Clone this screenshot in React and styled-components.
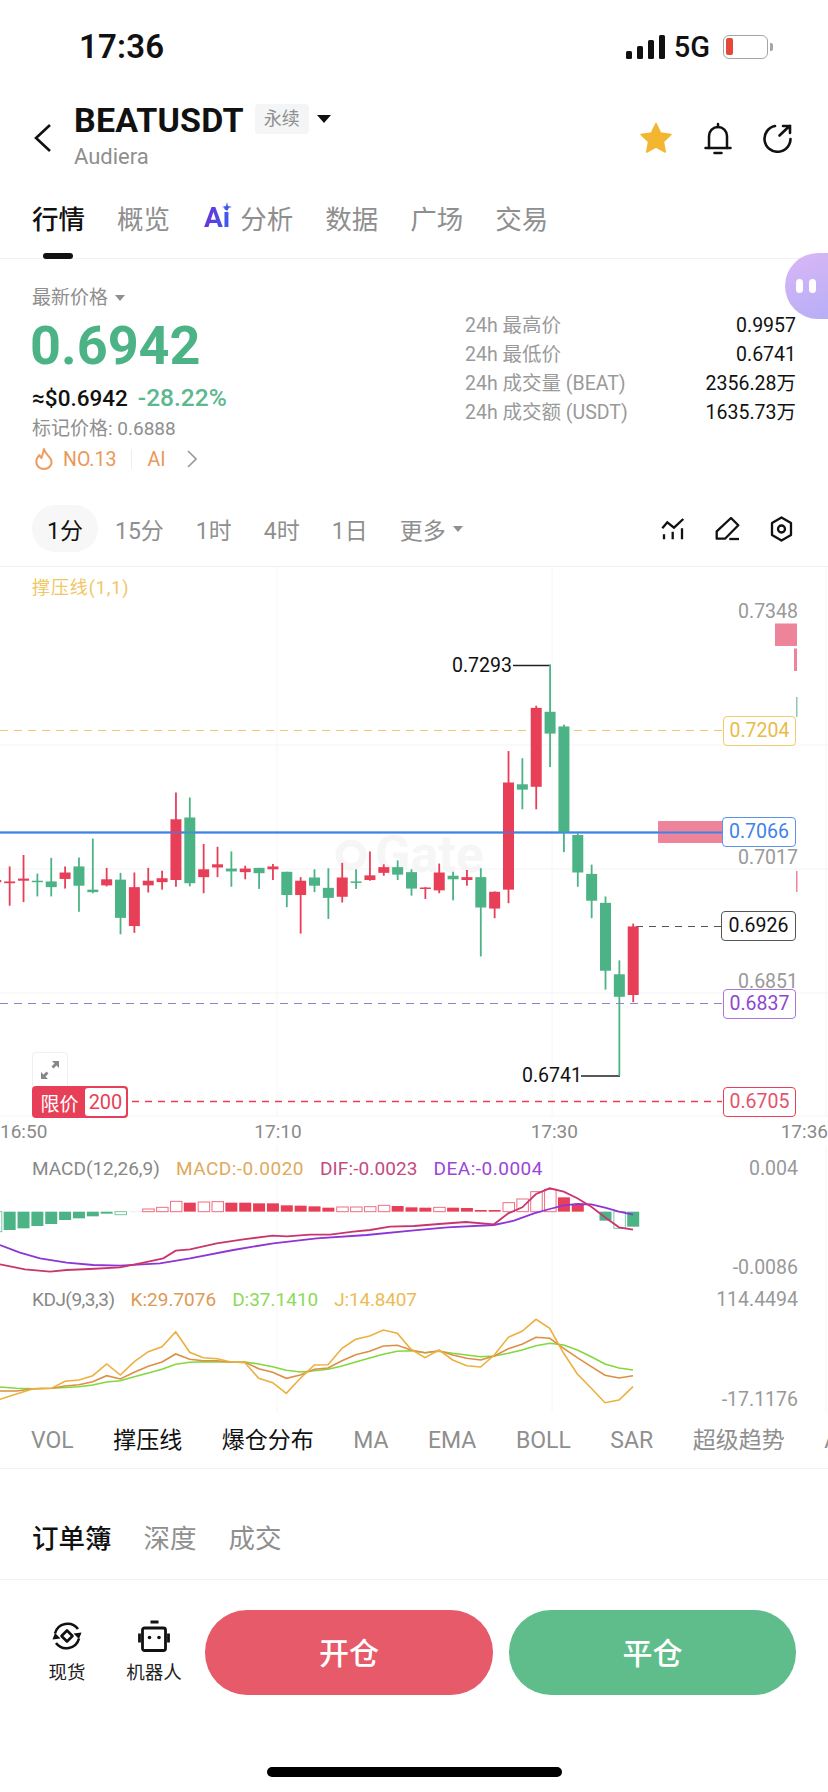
import React from 'react';
import styled, { createGlobalStyle } from 'styled-components';

const FONT = `Roboto, "Noto Sans CJK SC", sans-serif`;
const GREEN = '#4cb386';
const RED = '#e83f58';
const GRAY = '#8f8f8f';

const GlobalStyle = createGlobalStyle`
  html, body { margin: 0; padding: 0; background: #fff; }
  body { font-family: ${FONT}; color: #111; }
  * { box-sizing: border-box; }
`;

const Page = styled.div`
  position: relative;
  width: 828px;
  height: 1792px;
  overflow: hidden;
  background: #fff;
`;

/* status bar */
const StatusBar = styled.div`
  height: 90px;
  padding: 30px 60px 0 79px;
  display: flex;
  justify-content: space-between;
  align-items: flex-start;
`;
const Clock = styled.div`
  font-size: 33px;
  line-height: 34px;
  font-weight: 600;
  letter-spacing: 0.2px;
`;
const StatusRight = styled.div`
  display: flex;
  align-items: center;
  height: 34px;
  gap: 9px;
`;
const NetLabel = styled.span`
  font-size: 29px;
  font-weight: 500;
  margin-right: 4px;
`;
const Battery = styled.div`
  position: relative;
  width: 45px;
  height: 24px;
  border: 1.5px solid #a5a5a5;
  border-radius: 6px;
  padding: 2px;
  &::before {
    content: '';
    display: block;
    width: 7px;
    height: 17px;
    background: #e5483a;
    border-radius: 2px;
  }
  &::after {
    content: '';
    position: absolute;
    right: -6px;
    top: 7px;
    width: 3px;
    height: 8px;
    background: #a5a5a5;
    border-radius: 0 2px 2px 0;
  }
`;

/* header */
const Header = styled.div`
  height: 96px;
  padding: 0 35px 0 34px;
  display: flex;
  align-items: center;
`;
const TitleBlock = styled.div`
  margin-left: 23px;
  padding-bottom: 2px;
`;
const TitleRow = styled.div`
  display: flex;
  align-items: center;
  height: 30px;
`;
const Symbol = styled.span`
  font-size: 34px;
  line-height: 30px;
  font-weight: 700;
  letter-spacing: 0.2px;
`;
const Badge = styled.span`
  margin: -3px 8px 0 11px;
  width: 54px;
  height: 30px;
  border-radius: 4px;
  background: #f4f5f6;
  color: ${GRAY};
  font-size: 18px;
  line-height: 30px;
  text-align: center;
`;
const Caret = styled.span`
  width: 0;
  height: 0;
  margin-top: ${(p) => p.$top || 0}px;
  margin-left: ${(p) => p.$left || 0}px;
  border-left: ${(p) => p.$size}px solid transparent;
  border-right: ${(p) => p.$size}px solid transparent;
  border-top: ${(p) => p.$size + 1}px solid ${(p) => p.$color};
`;
const SubTitle = styled.div`
  margin-top: 10px;
  font-size: 22px;
  line-height: 24px;
  color: ${GRAY};
`;
const HeaderIcons = styled.div`
  margin-left: auto;
  display: flex;
  align-items: center;
  gap: 31px;
`;

/* main tabs */
const Tabs = styled.div`
  height: 73px;
  padding: 16px 0 0 32px;
  display: flex;
  gap: 32px;
  border-bottom: 1px solid #f1f1f1;
`;
const Tab = styled.div`
  position: relative;
  display: flex;
  align-items: center;
  height: 30px;
  font-size: 26.5px;
  color: ${(p) => (p.$active ? '#111' : GRAY)};
  font-weight: ${(p) => (p.$active ? 500 : 400)};
  ${(p) =>
    p.$active &&
    `&::after {
      content: '';
      position: absolute;
      left: 11px;
      top: 51px;
      width: 30px;
      height: 6px;
      border-radius: 3px;
      background: #111;
    }`}
`;
const AiMark = styled.span`
  position: relative;
  margin: 0 10px 0 2px;
  font-size: 28px;
  font-weight: 700;
  background: linear-gradient(90deg, #6a33d8, #3a5cf0);
  -webkit-background-clip: text;
  background-clip: text;
  color: transparent;
`;
const AiSpark = styled.svg`
  position: absolute;
  right: -2px;
  top: 1px;
`;

/* price block */
const PriceSection = styled.div`
  display: flex;
  height: 246px;
  padding: 0 32px;
`;
const PriceLeft = styled.div`
  padding-top: 27px;
`;
const LabelRow = styled.div`
  display: flex;
  align-items: center;
  font-size: 19px;
  line-height: 24px;
  color: ${GRAY};
`;
const BigPrice = styled.div`
  margin: 6px 0 8px -2px;
  font-size: 54px;
  line-height: 60px;
  font-weight: 700;
  color: ${GREEN};
`;
const FiatRow = styled.div`
  display: flex;
  gap: 10px;
  font-size: 22.5px;
  line-height: 28px;
`;
const Fiat = styled.span`
  font-weight: 500;
`;
const Change = styled.span`
  color: #5cb88f;
  font-size: 24.5px;
  font-weight: 500;
`;
const MarkPrice = styled.div`
  margin-top: 5px;
  font-size: 19px;
  line-height: 24px;
  color: ${GRAY};
`;
const TagRow = styled.div`
  margin-top: 5px;
  height: 26px;
  display: flex;
  align-items: center;
  color: #e8995a;
  font-size: 19.5px;
`;
const TagDivider = styled.span`
  width: 1px;
  height: 20px;
  margin: 0 15px;
  background: #eee;
`;
const Stats = styled.div`
  margin-left: auto;
  width: 331px;
  padding-top: 52px;
`;
const StatRow = styled.div`
  display: flex;
  justify-content: space-between;
  font-size: 19.5px;
  line-height: 29px;
`;
const StatLabel = styled.span`
  color: #9a9a9a;
`;
const StatValue = styled.span`
  color: #111;
`;

/* timeframe row */
const Timeframes = styled.div`
  height: 62px;
  padding: 0 35px 0 32px;
  display: flex;
  gap: 32px;
  border-bottom: 1px solid #f1f1f1;
`;
const Period = styled.div`
  height: 47px;
  display: flex;
  align-items: center;
  font-size: 23px;
  color: ${GRAY};
`;
const ActivePeriod = styled(Period)`
  width: 66px;
  margin-right: -15px;
  justify-content: center;
  border-radius: 24px;
  background: #f7f7f7;
  color: #111;
`;
const ToolIcons = styled.div`
  margin-left: auto;
  height: 47px;
  display: flex;
  align-items: center;
  gap: 30px;
`;

/* chart */
const Chart = styled.div`
  position: relative;
  height: 550px;
`;
const Plot = styled.svg`
  position: absolute;
  left: 0;
  top: 0;
  display: block;
`;
const ChartLegend = styled.div`
  position: absolute;
  left: 32px;
  top: 10px;
  font-size: 18px;
  line-height: 22px;
  letter-spacing: 0.9px;
  color: #f0c763;
`;
const Watermark = styled.div`
  position: absolute;
  left: 375px;
  top: 258px;
  font-size: 52px;
  line-height: 60px;
  font-weight: 700;
  color: #f6f6f6;
`;
const AxisLabel = styled.div`
  position: absolute;
  right: 30px;
  top: ${(p) => p.$y}px;
  font-size: 19.5px;
  line-height: 24px;
  color: #999;
`;
const PriceTag = styled.div`
  position: absolute;
  right: 32px;
  top: ${(p) => p.$y}px;
  width: ${(p) => p.$w}px;
  height: 30px;
  border: 1px solid ${(p) => p.$c};
  border-radius: 4px;
  background: #fff;
  color: ${(p) => p.$t || p.$c};
  font-size: 19.5px;
  line-height: 28px;
  text-align: center;
`;
const PeakLabel = styled.div`
  position: absolute;
  left: ${(p) => p.$x}px;
  top: ${(p) => p.$y}px;
  font-size: 19.5px;
  line-height: 22px;
  color: #111;
`;
const ExpandBox = styled.div`
  position: absolute;
  left: 32px;
  top: 485px;
  width: 36px;
  height: 36px;
  display: flex;
  align-items: center;
  justify-content: center;
  border: 1px solid #efefef;
  border-radius: 4px 4px 0 0;
  background: #fff;
`;
const LimitBadge = styled.div`
  position: absolute;
  left: 32px;
  top: 519px;
  width: 96px;
  height: 32px;
  padding: 2px;
  display: flex;
  align-items: center;
  border-radius: 4px;
  background: ${RED};
  color: #fff;
  font-size: 19px;
`;
const LimitText = styled.span`
  width: 51px;
  text-align: center;
`;
const LimitValue = styled.span`
  flex: 1;
  height: 28px;
  border-radius: 3px;
  background: #fff;
  color: ${RED};
  font-size: 20px;
  line-height: 28px;
  text-align: center;
`;

const TimeAxis = styled.div`
  height: 29px;
  display: flex;
  font-size: 19px;
  line-height: 30px;
  color: #8a8a8a;
`;
const TimeSlot = styled.span`
  margin-left: ${(p) => (p.$ml === undefined ? 'auto' : `${p.$ml}px`)};
`;

const Panel = styled.div`
  position: relative;
  height: ${(p) => p.$h}px;
`;
const Legend = styled.div`
  position: relative;
  padding: ${(p) => p.$pt}px 0 0 32px;
  display: flex;
  gap: 16px;
  font-size: 19px;
  line-height: 24px;
  white-space: nowrap;
`;
const LegendItem = styled.span`
  color: ${(p) => p.$c};
  letter-spacing: ${(p) => p.$ls || 0}px;
`;

/* indicators + order tabs */
const IndicatorRow = styled.div`
  height: 49px;
  padding: 8px 0 0 31px;
  display: flex;
  gap: 39.5px;
  overflow: hidden;
  border-bottom: 1px solid #f3f3f3;
`;
const Indicator = styled.span`
  font-size: 23px;
  line-height: 26px;
  white-space: nowrap;
  color: ${(p) => (p.$on ? '#111' : GRAY)};
`;
const BookTabs = styled.div`
  height: 111px;
  padding: 55px 0 0 32px;
  display: flex;
  gap: 32px;
  border-bottom: 1px solid #f3f3f3;
`;
const BookTab = styled.span`
  font-size: 26.5px;
  line-height: 30px;
  font-weight: ${(p) => (p.$on ? 500 : 400)};
  color: ${(p) => (p.$on ? '#111' : GRAY)};
`;

/* footer */
const Footer = styled.div`
  padding: 30px 32px 0 0;
  display: flex;
  align-items: flex-start;
`;
const FootItem = styled.div`
  width: ${(p) => p.$w}px;
  margin-left: ${(p) => p.$ml}px;
  padding-top: 10px;
  display: flex;
  flex-direction: column;
  align-items: center;
  font-size: 18.5px;
  line-height: 24px;
  color: #222;
`;
const FootIcon = styled.svg`
  margin-bottom: 9px;
  display: block;
`;
const ActionButton = styled.div`
  width: ${(p) => p.$w}px;
  height: 85px;
  margin-left: ${(p) => p.$ml}px;
  padding-bottom: 3px;
  display: flex;
  align-items: center;
  justify-content: center;
  border-radius: 42px;
  background: ${(p) => p.$bg};
  color: #fff;
  font-size: 30px;
  font-weight: 500;
`;
const HomeBar = styled.div`
  position: absolute;
  left: 267px;
  top: 1767px;
  width: 295px;
  height: 10px;
  border-radius: 5px;
  background: #000;
`;
const FloatBall = styled.div`
  position: absolute;
  right: 0;
  top: 253px;
  width: 43px;
  height: 66px;
  padding-left: 11px;
  display: flex;
  align-items: center;
  gap: 6px;
  border-radius: 33px 0 0 33px;
  background: linear-gradient(160deg, #d9b7f5, #b7aef7);
`;
const FloatDot = styled.span`
  width: 7px;
  height: 14px;
  border-radius: 4px;
  background: #fff;
`;

/* chart data: measured off the picture, y as [high, low, bodyTop, bodyBottom] */
const CANDLES = [
  [860, 880, 868, 874, 'r'],
  [830, 940, 872, 877, 'r'], [798, 930, 864, 870, 'r'], [850, 914, 870, 872, 'g'], [806, 914, 872, 888, 'g'],
  [830, 892, 847, 865, 'r'], [805, 957, 830, 884, 'g'], [752, 905, 895, 902, 'g'], [834, 886, 866, 883, 'r'],
  [848, 1020, 867, 974, 'g'], [847, 1016, 888, 997, 'r'], [834, 903, 870, 883, 'r'], [842, 895, 863, 874, 'r'],
  [623, 887, 698, 868, 'r'], [637, 886, 693, 877, 'g'], [767, 905, 838, 860, 'r'], [775, 860, 824, 833, 'r'],
  [788, 887, 836, 844, 'g'], [828, 866, 836, 846, 'r'], [834, 893, 834, 849, 'g'], [823, 868, 830, 838, 'r'],
  [845, 944, 845, 910, 'g'], [860, 1018, 870, 910, 'r'], [838, 902, 861, 884, 'g'], [835, 977, 890, 918, 'g'],
  [820, 931, 861, 915, 'r'], [838, 893, 872, 875, 'g'], [788, 870, 855, 868, 'r'], [824, 856, 832, 848, 'r'],
  [813, 868, 832, 853, 'g'], [838, 912, 846, 892, 'g'],
  [888, 921, 889, 893, 'r'], [822, 905, 847, 897, 'r'], [845, 925, 856, 866, 'g'], [840, 884, 860, 868, 'r'],
  [835, 1082, 860, 945, 'g'], [900, 975, 901, 948, 'r'], [507, 933, 595, 895, 'r'], [527, 670, 600, 615, 'g'],
  [380, 670, 386, 607, 'r'], [265, 552, 397, 458, 'g'], [433, 790, 438, 735, 'g'], [738, 887, 742, 847, 'g'],
  [825, 975, 851, 926, 'g'], [914, 1175, 932, 1122, 'g'], [1093, 1416, 1132, 1195, 'g'], [990, 1210, 998, 1190, 'r'],
];

const HIST = [
  [305, 'h'], [300, 'f'], [295, 'f'], [288, 'f'], [282, 'f'], [270, 'f'], [265, 'f'], [259, 'f'], [251, 'f'],
  [254, 'h'], [245, 'f'], [237, 'h'], [232, 'h'], [214, 'h'], [218, 'f'], [216, 'h'], [215, 'h'], [218, 'f'],
  [218, 'f'], [220, 'f'], [220, 'f'], [226, 'f'], [227, 'f'], [229, 'f'], [233, 'f'], [231, 'h'], [231, 'h'],
  [230, 'h'], [226, 'h'], [228, 'f'], [232, 'f'], [233, 'f'], [232, 'h'], [233, 'f'], [234, 'f'], [240, 'f'],
  [240, 'f'], [218, 'h'], [207, 'h'], [185, 'h'], [178, 'h'], [202, 'f'], [222, 'f'], [245, 'f'], [272, 'f'],
  [295, 'h'], [290, 'f'],
];

const DIF = [[0,403],[75,418],[150,425],[200,420],[270,417],[360,412],[420,400],[490,385],[527,362],[570,358],[650,340],[730,328],[818,317],[860,319],[930,314],[990,314],[1060,305],[1110,300],[1170,290],[1242,288],[1317,282],[1397,276],[1482,283],[1525,250],[1567,232],[1608,192],[1649,175],[1691,185],[1732,205],[1774,230],[1815,262],[1857,292],[1899,299]];
const DEA = [[0,345],[60,368],[120,385],[200,398],[280,405],[360,407],[480,400],[570,385],[700,360],[820,340],[950,325],[1100,315],[1242,301],[1342,292],[1482,285],[1542,272],[1602,250],[1649,237],[1691,226],[1732,222],[1774,223],[1815,233],[1857,245],[1899,254]];
const KDJ_J = [[0,808],[40,795],[100,776],[155,775],[195,754],[237,750],[278,737],[320,702],[361,735],[403,695],[445,665],[486,650],[527,605],[569,667],[610,683],[652,686],[693,696],[735,698],[776,745],[818,758],[859,790],[901,745],[943,705],[984,704],[1026,655],[1067,628],[1109,618],[1150,600],[1192,610],[1233,658],[1275,683],[1317,660],[1358,690],[1400,707],[1442,711],[1483,675],[1525,622],[1566,604],[1608,568],[1649,595],[1691,670],[1732,732],[1774,775],[1815,818],[1857,810],[1899,770]];
const KDJ_K = [[0,783],[50,783],[100,776],[155,775],[195,768],[237,764],[278,755],[320,737],[361,747],[403,727],[445,709],[486,696],[527,672],[569,688],[610,692],[652,692],[693,697],[735,697],[776,716],[818,727],[859,745],[901,735],[943,718],[984,714],[1026,692],[1067,674],[1109,664],[1150,648],[1192,646],[1233,660],[1275,668],[1317,662],[1358,675],[1400,685],[1442,690],[1483,678],[1525,656],[1566,643],[1608,622],[1649,625],[1691,655],[1732,683],[1774,710],[1815,736],[1857,744],[1899,737]];
const KDJ_D = [[0,771],[50,775],[100,776],[155,775],[237,770],[278,765],[320,756],[361,752],[403,740],[445,729],[486,718],[527,703],[569,697],[610,695],[693,696],[735,696],[776,702],[818,710],[859,721],[901,726],[943,722],[984,718],[1026,708],[1067,696],[1109,684],[1150,673],[1192,664],[1233,662],[1275,668],[1317,664],[1358,670],[1400,675],[1442,680],[1483,678],[1525,670],[1566,660],[1608,647],[1649,640],[1691,645],[1732,660],[1774,680],[1815,702],[1857,714],[1899,720]];

const candleX = (i) => (29 + (i - 1) * 41.57) / 3;
const mainY = (z) => 570 + z / 2.8;
const subY = (z) => 1130 + z / 3;
const linePts = (list) => list.map(([x, y]) => `${(x / 3).toFixed(1)},${subY(y).toFixed(1)}`).join(' ');

const GRID_X = [277, 552, 826];

function MainPlot() {
  return (
    <Plot width="828" height="550" viewBox="0 567 828 550">
      <circle cx="351" cy="855" r="12" fill="none" stroke="#f6f6f6" strokeWidth="7" />
      {[745, 869, 993, 1116].map((y) => (
        <line key={y} x1="0" x2="828" y1={y} y2={y} stroke="#f4f4f4" />
      ))}
      {GRID_X.map((x) => (
        <line key={x} x1={x} x2={x} y1="567" y2="1117" stroke="#f6f6f6" />
      ))}
      <rect x="775" y="623.5" width="22" height="22.5" fill="#ee8499" />
      <rect x="794" y="648.5" width="3" height="22.5" fill="#ee8499" />
      <rect x="796" y="697" width="1.5" height="20" fill="#8cc9ac" />
      <rect x="658" y="821" width="64" height="22" fill="#ee8499" />
      <rect x="796" y="871" width="1.5" height="21" fill="#ee8499" />
      <line x1="0" x2="722" y1="730.5" y2="730.5" stroke="#f0cb6c" strokeWidth="1.2" strokeDasharray="8 6" />
      <line x1="0" x2="722" y1="832.5" y2="832.5" stroke="#3f82e8" strokeWidth="2" />
      <line x1="0" x2="722" y1="1003.5" y2="1003.5" stroke="#9a7cc8" strokeWidth="1.2" strokeDasharray="8 6" />
      <line x1="132" x2="722" y1="1101.5" y2="1101.5" stroke={RED} strokeWidth="1.4" strokeDasharray="7 6" />
      <line x1="636" x2="721" y1="926.5" y2="926.5" stroke="#555" strokeWidth="1.2" strokeDasharray="7 6" />
      <polyline points="513,665.5 551,665.5" fill="none" stroke="#222" strokeWidth="1.3" />
      <polyline points="581,1076 620,1076" fill="none" stroke="#222" strokeWidth="1.3" />
      {CANDLES.map(([hi, lo, top, bottom, side], i) => {
        const x = candleX(i);
        const fill = side === 'r' ? RED : GREEN;
        return (
          <g key={i} fill={fill}>
            <rect x={x - 0.9} y={mainY(hi)} width="1.8" height={mainY(lo) - mainY(hi)} />
            <rect x={x - 5.5} y={mainY(top)} width="11" height={Math.max(mainY(bottom) - mainY(top), 1.5)} />
          </g>
        );
      })}
      <line x1="0" x2="658" y1="832.5" y2="832.5" stroke="#3f82e8" strokeWidth="2" opacity="0.55" />
    </Plot>
  );
}

function MacdPlot() {
  const zero = subY(245);
  return (
    <Plot width="828" height="138" viewBox="0 1146 828 138">
      {GRID_X.map((x) => (
        <line key={x} x1={x} x2={x} y1="1146" y2="1284" stroke="#f6f6f6" />
      ))}
      <line x1="130" x2="180" y1={zero} y2={zero} stroke="#eee" />
      {HIST.map(([z, kind], i) => {
        const y = subY(z);
        const x = candleX(i);
        const up = y < zero;
        const color = up ? RED : GREEN;
        const top = up ? y : zero;
        const h = Math.abs(y - zero);
        if (h < 0.5) return null;
        return kind === 'f' ? (
          <rect key={i} x={x - 6} y={top} width="12" height={h} fill={color} />
        ) : (
          <rect key={i} x={x - 5.5} y={top} width="11.5" height={h} fill="#fff" stroke={color} strokeOpacity="0.75" />
        );
      })}
      <polyline points={linePts(DEA)} fill="none" stroke="#8e35d6" strokeWidth="1.8" />
      <polyline points={linePts(DIF)} fill="none" stroke="#c9366e" strokeWidth="1.8" />
    </Plot>
  );
}

function KdjPlot() {
  return (
    <Plot width="828" height="136" viewBox="0 1284 828 136">
      {GRID_X.map((x) => (
        <line key={x} x1={x} x2={x} y1="1284" y2="1412" stroke="#f6f6f6" />
      ))}
      <polyline points={linePts(KDJ_D)} fill="none" stroke="#82d93e" strokeWidth="1.6" />
      <polyline points={linePts(KDJ_K)} fill="none" stroke="#dd8f45" strokeWidth="1.6" />
      <polyline points={linePts(KDJ_J)} fill="none" stroke="#ebb03f" strokeWidth="1.6" />
    </Plot>
  );
}

const INDICATORS = [
  ['VOL'], ['撑压线', true], ['爆仓分布', true], ['MA'], ['EMA'], ['BOLL'], ['SAR'], ['超级趋势'], ['AVL'],
];

export default function App() {
  return (
    <Page>
      <GlobalStyle />
      <StatusBar>
        <Clock>17:36</Clock>
        <StatusRight>
          <svg width="39" height="24" viewBox="0 0 39 24">
            <rect x="0" y="16" width="6" height="8" rx="1.5" fill="#111" />
            <rect x="11" y="11" width="6" height="13" rx="1.5" fill="#111" />
            <rect x="22" y="5" width="6" height="19" rx="1.5" fill="#111" />
            <rect x="33" y="0" width="6" height="24" rx="1.5" fill="#111" />
          </svg>
          <NetLabel>5G</NetLabel>
          <Battery />
        </StatusRight>
      </StatusBar>

      <Header>
        <svg width="17" height="28" viewBox="0 0 17 28">
          <polyline points="16,1 2,14 16,27" fill="none" stroke="#111" strokeWidth="2.6" />
        </svg>
        <TitleBlock>
          <TitleRow>
            <Symbol>BEATUSDT</Symbol>
            <Badge>永续</Badge>
            <Caret $size={7} $color="#111" $top={-3} />
          </TitleRow>
          <SubTitle>Audiera</SubTitle>
        </TitleBlock>
        <HeaderIcons>
          <svg width="34" height="32" viewBox="0 0 34 32">
            <path
              d="M17 1.5l4.6 9.6 10.4 1.4-7.6 7.2 1.9 10.4L17 25.2 7.7 30.1l1.9-10.4L2 12.5l10.4-1.4z"
              fill="#f2b630"
              stroke="#f2b630"
              strokeWidth="1.5"
              strokeLinejoin="round"
            />
          </svg>
          <svg width="28" height="33" viewBox="0 0 28 33" fill="none" stroke="#111" strokeWidth="2.5" strokeLinecap="round">
            <path d="M5 26V14a9 9 0 0 1 18 0v12" />
            <path d="M1.500 26h25M14 2v3M10.500 31h7" />
          </svg>
          <svg width="30" height="29" viewBox="0 0 30 29" fill="none" stroke="#111" strokeWidth="2.6" strokeLinecap="round">
            <path d="M12 2A13 13 0 1 0 27.500 15" />
            <path d="M16.500 11.500L26.500 2M20 2h7v7" />
          </svg>
        </HeaderIcons>
      </Header>

      <Tabs>
        <Tab $active>行情</Tab>
        <Tab>概览</Tab>
        <Tab>
          <AiMark>
            Ai
            <AiSpark width="10" height="10" viewBox="0 0 10 10">
              <path d="M5 0l1 4 4 1-4 1-1 4-1-4-4-1 4-1z" fill="#3a5cf0" />
            </AiSpark>
          </AiMark>
          分析
        </Tab>
        <Tab>数据</Tab>
        <Tab>广场</Tab>
        <Tab>交易</Tab>
      </Tabs>

      <PriceSection>
        <PriceLeft>
          <LabelRow>
            最新价格
            <Caret $size={5.5} $color="#8f8f8f" $left={7} />
          </LabelRow>
          <BigPrice>0.6942</BigPrice>
          <FiatRow>
            <Fiat>≈$0.6942</Fiat>
            <Change>-28.22%</Change>
          </FiatRow>
          <MarkPrice>标记价格: 0.6888</MarkPrice>
          <TagRow>
            <svg width="20" height="24" viewBox="0 0 20 24" fill="none" stroke="#ee9d62" strokeWidth="2" style={{ margin: '0 9px 0 2px' }}>
              <path d="M10 2c.5 4 5 6.500 7 10.500 2 5-2 9.500-7 9.500s-8.500-4-7.500-9c.5-2.500 2-4 3-5 .5 1.500 1 2.500 2 3 1-2.500 1.500-5.500 2.500-9z" strokeLinejoin="round" />
            </svg>
            NO.13
            <TagDivider />
            AI
            <svg width="10" height="18" viewBox="0 0 10 18" fill="none" stroke="#999" strokeWidth="1.6" style={{ marginLeft: 22 }}>
              <polyline points="1,1 9,9 1,17" />
            </svg>
          </TagRow>
        </PriceLeft>
        <Stats>
          <StatRow>
            <StatLabel>24h 最高价</StatLabel>
            <StatValue>0.9957</StatValue>
          </StatRow>
          <StatRow>
            <StatLabel>24h 最低价</StatLabel>
            <StatValue>0.6741</StatValue>
          </StatRow>
          <StatRow>
            <StatLabel>24h 成交量 (BEAT)</StatLabel>
            <StatValue>2356.28万</StatValue>
          </StatRow>
          <StatRow>
            <StatLabel>24h 成交额 (USDT)</StatLabel>
            <StatValue>1635.73万</StatValue>
          </StatRow>
        </Stats>
      </PriceSection>

      <Timeframes>
        <ActivePeriod>1分</ActivePeriod>
        <Period>15分</Period>
        <Period>1时</Period>
        <Period>4时</Period>
        <Period>1日</Period>
        <Period>
          更多
          <Caret $size={5} $color="#8f8f8f" $left={7} />
        </Period>
        <ToolIcons>
          <svg width="24" height="24" viewBox="0 0 24 24" fill="none" stroke="#111" strokeWidth="2.300">
            <path d="M1.300 11.300L6.300 5.300 13 10.700 22.300 2" />
            <path d="M3 17.300v5M11.700 14.700v7.600M21 11.300v11" />
          </svg>
          <svg width="25" height="24" viewBox="0 0 25 24" fill="none" stroke="#111" strokeWidth="2.300" strokeLinejoin="round">
            <path d="M1.700 21.700v-7.400L16 1l7.300 7.300L10 21.700z" />
            <path d="M14.300 22h9.700" />
          </svg>
          <svg width="23" height="26" viewBox="0 0 23 26" fill="none" stroke="#111" strokeWidth="2.300" strokeLinejoin="round">
            <path d="M11.500 1.500l9.500 5.500v12l-9.500 5.500L2 19V7z" />
            <circle cx="11.500" cy="13" r="3.500" />
          </svg>
        </ToolIcons>
      </Timeframes>

      <Chart>
        <Watermark>Gate</Watermark>
        <MainPlot />
        <ChartLegend>撑压线(1,1)</ChartLegend>
        <AxisLabel $y={33}>0.7348</AxisLabel>
        <AxisLabel $y={279}>0.7017</AxisLabel>
        <AxisLabel $y={403}>0.6851</AxisLabel>
        <PriceTag $y={149} $w={73} $c="#f0cb6c" $t="#e9bb4a">0.7204</PriceTag>
        <PriceTag $y={250} $w={74} $c="#5c93ea" $t="#3f82e8">0.7066</PriceTag>
        <PriceTag $y={344} $w={75} $c="#555" $t="#111">0.6926</PriceTag>
        <PriceTag $y={422} $w={73} $c="#a877dc" $t="#8e47cf">0.6837</PriceTag>
        <PriceTag $y={520} $w={73} $c={RED} $t="#e4536a">0.6705</PriceTag>
        <PeakLabel $x={452} $y={88}>0.7293</PeakLabel>
        <PeakLabel $x={522} $y={498}>0.6741</PeakLabel>
        <ExpandBox>
          <svg width="20" height="20" viewBox="0 0 20 20" fill="#888">
            <path d="M12 1h7v7l-2.500-2.500-3 3-2-2 3-3zM8 19H1v-7l2.500 2.500 3-3 2 2-3 3z" />
          </svg>
        </ExpandBox>
        <LimitBadge>
          <LimitText>限价</LimitText>
          <LimitValue>200</LimitValue>
        </LimitBadge>
      </Chart>

      <TimeAxis>
        <TimeSlot $ml={0}>16:50</TimeSlot>
        <TimeSlot $ml={207}>17:10</TimeSlot>
        <TimeSlot $ml={229}>17:30</TimeSlot>
        <TimeSlot>17:36</TimeSlot>
      </TimeAxis>

      <Panel $h={138}>
        <MacdPlot />
        <Legend $pt={11}>
          <LegendItem $c="#888">MACD(12,26,9)</LegendItem>
          <LegendItem $c="#e0a95c" $ls={0.5}>MACD:-0.0020</LegendItem>
          <LegendItem $c="#c44a80" $ls={0.1}>DIF:-0.0023</LegendItem>
          <LegendItem $c="#9a45d8" $ls={0.5}>DEA:-0.0004</LegendItem>
        </Legend>
        <AxisLabel $y={11}>0.004</AxisLabel>
        <AxisLabel $y={110}>-0.0086</AxisLabel>
      </Panel>

      <Panel $h={136}>
        <KdjPlot />
        <Legend $pt={4}>
          <LegendItem $c="#888" $ls={-0.5}>KDJ(9,3,3)</LegendItem>
          <LegendItem $c="#dd9a55">K:29.7076</LegendItem>
          <LegendItem $c="#8fd95a">D:37.1410</LegendItem>
          <LegendItem $c="#ebbc55" $ls={-0.2}>J:14.8407</LegendItem>
        </Legend>
        <AxisLabel $y={4}>114.4494</AxisLabel>
        <AxisLabel $y={104}>-17.1176</AxisLabel>
      </Panel>

      <IndicatorRow>
        {INDICATORS.map(([name, on]) => (
          <Indicator key={name} $on={on}>
            {name}
          </Indicator>
        ))}
      </IndicatorRow>

      <BookTabs>
        <BookTab $on>订单簿</BookTab>
        <BookTab>深度</BookTab>
        <BookTab>成交</BookTab>
      </BookTabs>

      <Footer>
        <FootItem $w={60} $ml={37}>
          <FootIcon width="34" height="32" viewBox="0 0 34 32" fill="none" stroke="#111" strokeWidth="2.600">
            <path d="M5 13.500A13 13 0 0 1 28 9" />
            <path d="M29 18.500A13 13 0 0 1 6 23" />
            <path d="M23.500 13.500L31.500 12.500 29 19z" fill="#111" stroke="none" />
            <path d="M10.500 18.500L2.500 19.500 5 13z" fill="#111" stroke="none" />
            <path d="M17 10.500l5.500 5.500-5.500 5.500-5.500-5.500z" strokeLinejoin="round" />
          </FootIcon>
          现货
        </FootItem>
        <FootItem $w={60} $ml={27}>
          <FootIcon width="32" height="32" viewBox="0 0 32 32" fill="none" stroke="#111" strokeWidth="2.800">
            <rect x="4.500" y="8" width="23" height="22.500" rx="2" />
            <path d="M12.500 2h8M1.500 13.500v9M30.500 13.500v9" />
            <circle cx="11.500" cy="17.500" r="1.800" fill="#111" stroke="none" />
            <circle cx="21" cy="17.500" r="1.800" fill="#111" stroke="none" />
          </FootIcon>
          机器人
        </FootItem>
        <ActionButton $w={288} $ml={21} $bg="#e65a69">开仓</ActionButton>
        <ActionButton $w={287} $ml={16} $bg="#5fbd8c">平仓</ActionButton>
      </Footer>

      <FloatBall>
        <FloatDot />
        <FloatDot />
      </FloatBall>
      <HomeBar />
    </Page>
  );
}
